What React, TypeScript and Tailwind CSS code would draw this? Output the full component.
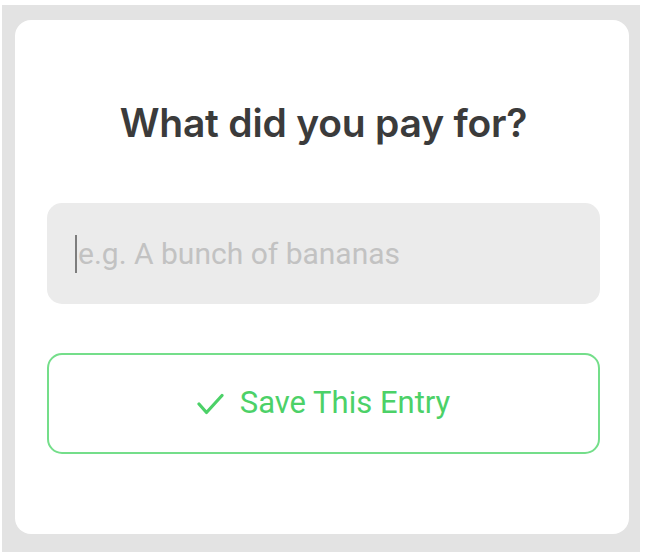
import { useState } from "react";

export default function App() {
  const [item, setItem] = useState("");

  return (
    <div className="w-[645px] h-[552px] bg-white pt-[5px] pl-[2px] pr-[5px]">
      <div className="h-full bg-[#e3e3e3] pl-[13px] pr-[11px] pt-[15px] pb-[18px]">
        <div className="h-full bg-white rounded-[16px] pl-[32px] pr-[29px] pt-[80px] flex flex-col">
          <h1
            className="text-center text-[39px] font-semibold text-[#3b3b3b] leading-[46px] tracking-[-0.2px]"
            style={{ fontFamily: "Inter, 'Noto Sans', sans-serif" }}
          >
            What did you pay for?
          </h1>

          <div className="mt-[57px] h-[101px] rounded-[15px] bg-[#ebebeb] flex items-center pl-[28px] pr-4">
            <span className="w-[2px] h-[38px] bg-[#7d7d7d] mr-[1px]" />
            <input
              value={item}
              onChange={(e) => setItem(e.target.value)}
              placeholder="e.g. A bunch of bananas"
              className="flex-1 bg-transparent outline-none text-[30px] font-normal text-[#3b3b3b] placeholder:text-[#c2c2c2]"
              style={{ fontFamily: "Roboto, 'Noto Sans', sans-serif" }}
            />
          </div>

          <button
            className="mt-[49px] h-[101px] rounded-[15px] border-2 border-[#74de8a] flex items-center justify-center gap-[16px] text-[#4cd168]"
            style={{ fontFamily: "Roboto, 'Noto Sans', sans-serif" }}
          >
            <svg width="27" height="22" viewBox="0 0 27 22" fill="none">
              <path d="M2 11 L9.5 19.5 L25 2.5" stroke="#4cd168" strokeWidth="3.2" strokeLinecap="round" strokeLinejoin="round" />
            </svg>
            <span className="text-[31px]">Save This Entry</span>
          </button>
        </div>
      </div>
    </div>
  );
}
